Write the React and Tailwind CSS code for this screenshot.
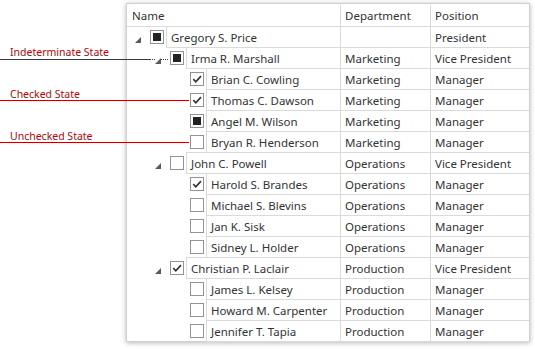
import React from "react";

const rows = [
  { name: "Gregory S. Price", dept: "", pos: "President", level: 0, parent: true, state: "mixed" },
  { name: "Irma R. Marshall", dept: "Marketing", pos: "Vice President", level: 1, parent: true, state: "mixed" },
  { name: "Brian C. Cowling", dept: "Marketing", pos: "Manager", level: 2, state: "on" },
  { name: "Thomas C. Dawson", dept: "Marketing", pos: "Manager", level: 2, state: "on" },
  { name: "Angel M. Wilson", dept: "Marketing", pos: "Manager", level: 2, state: "mixed" },
  { name: "Bryan R. Henderson", dept: "Marketing", pos: "Manager", level: 2, state: "off" },
  { name: "John C. Powell", dept: "Operations", pos: "Vice President", level: 1, parent: true, state: "off" },
  { name: "Harold S. Brandes", dept: "Operations", pos: "Manager", level: 2, state: "on" },
  { name: "Michael S. Blevins", dept: "Operations", pos: "Manager", level: 2, state: "off" },
  { name: "Jan K. Sisk", dept: "Operations", pos: "Manager", level: 2, state: "off" },
  { name: "Sidney L. Holder", dept: "Operations", pos: "Manager", level: 2, state: "off" },
  { name: "Christian P. Laclair", dept: "Production", pos: "Vice President", level: 1, parent: true, state: "on" },
  { name: "James L. Kelsey", dept: "Production", pos: "Manager", level: 2, state: "off" },
  { name: "Howard M. Carpenter", dept: "Production", pos: "Manager", level: 2, state: "off" },
  { name: "Jennifer T. Tapia", dept: "Production", pos: "Manager", level: 2, state: "off" },
];

const indent = { 0: "pl-0", 1: "pl-[20px]", 2: "pl-[40px]" };

function CheckBox({ state }) {
  return (
    <div className="w-[14px] h-[14px] shrink-0 border border-[#939393] bg-white flex items-center justify-center">
      {state === "mixed" && <div className="w-[8px] h-[8px] bg-[#222]" />}
      {state === "on" && (
        <svg width="12" height="12" viewBox="0 0 12 12">
          <path d="M2.3 6.2 L4.8 8.8 L10 3.2" fill="none" stroke="#333" strokeWidth="1.7" />
        </svg>
      )}
    </div>
  );
}

function Expander() {
  return (
    <svg width="6" height="6" viewBox="0 0 6 6" className="mt-[5px] ml-[8px]">
      <polygon points="6,0 6,6 0,6" fill="#5a5a5a" />
    </svg>
  );
}

export default function App() {
  return (
    <div
      className="relative w-[535px] h-[349px] bg-white overflow-hidden text-[#333]"
      style={{ fontFamily: '"Segoe UI", "Noto Sans", sans-serif' }}
    >
      <div className="flex">
        {/* callout labels */}
        <div className="w-[126px] shrink-0 pt-[45px] pl-[10px] text-[10.5px] leading-[14px] text-[#a00d0d]">
          <div className="h-[42px]">Indeterminate State</div>
          <div className="h-[42px]">Checked State</div>
          <div className="h-[42px]">Unchecked State</div>
        </div>

        {/* tree list */}
        <div className="mt-[3px] w-[404px] border border-[#cfcfcf] bg-white shadow-[0_1px_5px_rgba(0,0,0,0.28)] text-[11.5px]">
          <div className="flex h-[23px] border-b border-[#dadada] items-center pt-px">
            <div className="w-[213px] pl-[5px]">Name</div>
            <div className="w-[90px] h-full flex items-center border-l border-[#dadada] pl-[4px]">Department</div>
            <div className="flex-1 h-full flex items-center border-l border-[#dadada] pl-[4px]">Position</div>
          </div>
          <div className="-mb-px">
            {rows.map((r, i) => (
              <div key={i} className="flex h-[22px] -mt-px">
                <div className={"w-[213px] shrink-0 flex " + indent[r.level]}>
                  <div className="w-[23px] shrink-0 flex items-center">{r.parent && <Expander />}</div>
                  <div className="flex items-center mr-[2px]">
                    <CheckBox state={r.state} />
                  </div>
                  <div className="flex-1 flex items-center border-l border-t border-b border-[#dadada] pl-[4px] pt-px whitespace-nowrap">
                    {r.name}
                  </div>
                </div>
                <div className="w-[90px] shrink-0 flex items-center border-l border-t border-b border-[#dadada] pl-[4px] pt-px">
                  {r.dept}
                </div>
                <div className="flex-1 flex items-center border-l border-t border-b border-[#dadada] pl-[4px] pt-px">
                  {r.pos}
                </div>
              </div>
            ))}
          </div>
        </div>
      </div>

      {/* leader lines */}
      <div className="absolute left-0 top-[59px] w-[149px] h-px bg-[#a00d0d]" />
      <div className="absolute left-[149px] top-[59px] w-[6px] border-t border-dotted border-[#6b2a2a]" />
      <div className="absolute left-[161px] top-[59px] w-[7px] border-t border-dotted border-[#6b2a2a]" />
      <div className="absolute left-0 top-[100px] w-[189px] h-px bg-[#a00d0d]" />
      <div className="absolute left-0 top-[142px] w-[189px] h-px bg-[#a00d0d]" />
    </div>
  );
}
